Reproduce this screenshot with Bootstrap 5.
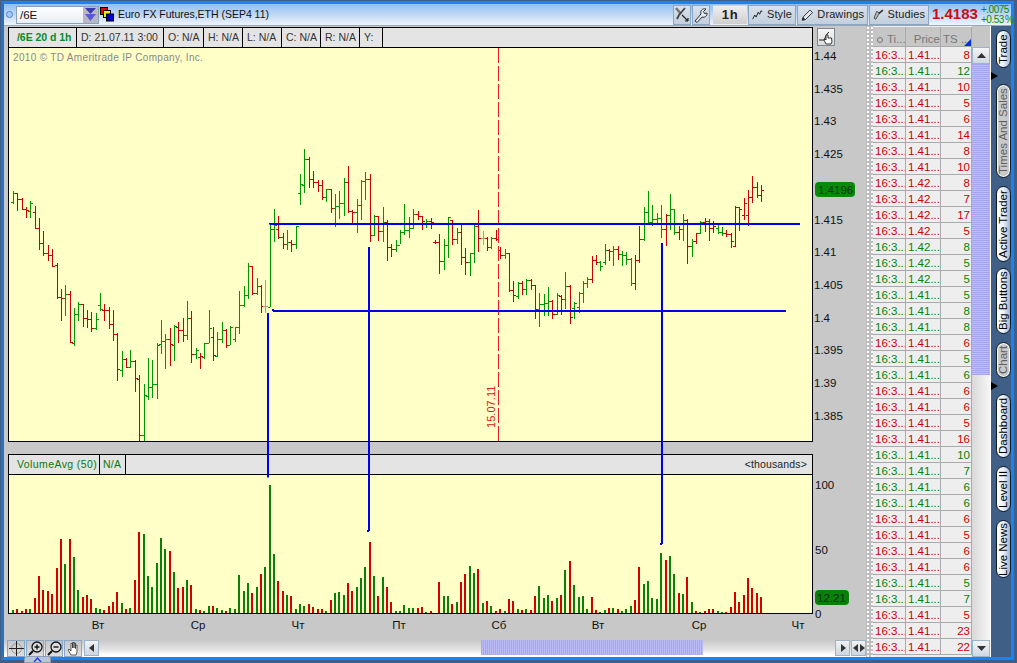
<!DOCTYPE html>
<html lang="en">
<head>
<meta charset="UTF-8">
<title>Euro FX Futures chart</title>
<link href="https://cdn.jsdelivr.net/npm/bootstrap@5.3.0/dist/css/bootstrap.min.css" rel="stylesheet">
<style>
html, body { margin: 0; width: 1017px; height: 663px; overflow: hidden; background: #3f5f87; }
body { font-family: "Liberation Sans", Arial, sans-serif; font-size: 11px; color: #111; }
svg { display: block; }
.app-frame { position: relative; margin: 1px 0 0 1px; width: 1013px; height: 659px; border: 3px solid #1784f5; border-left-color: #2a6fc4; }
.top-bar { height: 22px; background: linear-gradient(#93bff2, #c4daf5 55%, #eef4fb); border-bottom: 1px solid #9aa7b5; }
.status-dot { width: 7px; height: 7px; margin: 0 3px 0 2px; border: 1px solid #4c86d8; border-radius: 50%; background: #a9cbf3; }
.symbol-box { width: 83px; height: 18px; border: 1px solid #8aa0b8; background: linear-gradient(#fff, #e8eef6); }
.symbol-text { flex: 1; padding-left: 3px; font-size: 11.5px; line-height: 16px; }
.symbol-drop { width: 15px; background: #b8b8c4; }
.symbol-icon { margin: 0 0 0 1px; }
.symbol-name { font-size: 10.5px; letter-spacing: -.02px; }
.bar-btn { height: 20px; margin-left: 1px; padding: 0 3px; border: 1px solid #87a6c8; background: linear-gradient(#d8e1ec, #c3cfdd); font-size: 11px; color: #222; white-space: nowrap; letter-spacing: .1px; }
.btn-square { width: 18px; padding: 0; }
.btn-frame { width: 34px; margin-left: 3px; padding: 0; justify-content: center; background: linear-gradient(#eee, #cfcfcf); border-color: transparent; font-size: 13px; font-weight: bold; letter-spacing: .6px; }
.btn-style { width: 48px; }
.btn-drawings { width: 71px; }
.btn-studies { width: 60px; }
.last-price { margin-left: 3px; font-size: 15px; font-weight: bold; color: #cc0c14; width: 49px; }
.price-change { font-size: 10px; line-height: 10px; color: #0a8a0a; width: 30px; white-space: nowrap; letter-spacing: -.5px; word-spacing: -1px; }
.main-col { width: 862px; background: #c8c8c8; }
.chart-wrap { position: relative; padding: 1px 0 0 4px; }
.pane-left { width: 805px; }
.pane-head { height: 21px; background: #e4e4e4; border: 1px solid #000; font-size: 10.5px; line-height: 19px; color: #333; }
.pane-cell { height: 19px; border-right: 1px solid #000; padding-left: 4px; white-space: nowrap; }
.cell-sym { width: 68px; padding-left: 8px; color: #0a8a2a; font-weight: bold; letter-spacing: -.05px; }
.cell-d { width: 87px; }
.cell-o { width: 40px; }
.cell-h { width: 39px; }
.cell-y { width: 23px; }
.cell-vol { width: 91px; padding-left: 8px; color: #0a7a0a; letter-spacing: .4px; }
.cell-na { width: 26px; padding-left: 3px; color: #0a7a0a; letter-spacing: .2px; }
.cell-unit { flex: 1; padding-right: 5px; text-align: right; color: #222; letter-spacing: .15px; }
.price-plot { height: 394px; border: 1px solid #000; border-top: 0; background: #ffffc8; }
.vol-plot { height: 139px; border: 1px solid #000; border-top: 0; background: #ffffc8; }
.pane-gap { height: 12px; }
.time-axis { height: 26px; }
#volAxis { overflow: visible; }
.copy-note { font-family: "Liberation Sans", sans-serif; font-size: 10px; letter-spacing: .33px; fill: #888; }
.chart-pick { width: 18px; height: 18px; margin: 1px 0 0 4px; border: 1px solid #7d8794; background: linear-gradient(#f6f6f6, #ddd); }
.lines-layer { position: absolute; left: 0; top: 0; pointer-events: none; }
.bottom-bar { height: 17px; background: linear-gradient(#c8c8c8, #e6e6e6 60%, #fff 85%); padding-left: 3px; }
.tool-btn { width: 18px; height: 17px; margin-right: 1px; border: 1px solid #8aa6c6; background: linear-gradient(#c8c8c8, #dedede); }
.scroll-btn { width: 15px; height: 16px; margin-left: 1px; border: 1px solid #9db3cc; background: linear-gradient(#f2f2f2, #cdd6e0); }
.scroll-track { flex: 1; height: 15px; }
.time-thumb { width: 222px; height: 15px; margin-left: 382px; background: repeating-linear-gradient(90deg, #a6a6ee 0 1px, #bcbcf6 1px 2px); }
.split-bar { width: 7px; background-color: #bdbdbd; background-image: radial-gradient(#fff 1px, transparent 1.2px); background-size: 4px 4px; }
.trades-col { width: 99px; padding-top: 1px; background: #eee; overflow: hidden; }
.ts-grid { width: 99px; margin: 0; table-layout: fixed; border-collapse: separate; border-spacing: 0; }
.ts-grid th, .ts-grid td { height: 16px; padding: 1px 0 0 2px; border: 0; border-right: 1px solid #aaa; border-bottom: 1px solid #aaa; box-shadow: none; background: #eee; font-size: 11.5px; font-weight: normal; line-height: 14px; white-space: nowrap; overflow: hidden; }
.ts-grid th { height: 20px; background: #c6c6c6; color: #777; position: relative; }
.ts-grid td:last-child, .ts-grid th:last-child { text-align: right; padding-right: 1px; }
.ts-grid th:last-child { padding-right: 4px; }
.ts-grid .tr-up td { color: #0a800a; }
.ts-grid .tr-down td { color: #cc0000; }
.col-a { width: 33px; }
.col-b { width: 35px; }
.col-c { width: 31px; }
.head-dot { display: inline-block; width: 6px; height: 6px; margin: 0 4px 0 2px; border: 1.5px solid #777; border-radius: 50%; }
.head-flag { position: absolute; right: 0; bottom: 0; border-left: 7px solid transparent; border-bottom: 7px solid #0033dd; }
.vscroll { width: 18px; background: linear-gradient(90deg, #d9d9d9, #f6f6f6); }
.vscroll-head { height: 21px; background: #c6c6c6; border-top: 1px solid #c8c8c8; }
.vscroll-btn { width: 18px; height: 17px; border: 1px solid #9db3cc; background: linear-gradient(#f4f4f4, #cfd8e2); }
.vscroll-thumb { height: 311px; background: repeating-linear-gradient(#a6a6ee 0 1px, #bcbcf6 1px 2px); }
.white-gap { width: 1px; background: #fff; }
.tab-strip { width: 20px; padding: 4px 0 0 5px; background: #3f5f87; }
.side-tab { width: 15px; border: 1px solid #0c1a2a; border-radius: 8px; background: linear-gradient(270deg, #fff, #eaf0f8 50%, #9fb6d0); writing-mode: vertical-rl; transform: rotate(180deg); text-align: center; font-size: 11.5px; line-height: 13px; color: #000; white-space: nowrap; }
.side-tab.is-on { background: #c9c9c9; color: #5f5f5f; box-shadow: inset 0 0 0 1px #fff; }
.tab-1 { height: 38px; }
.tab-2 { height: 94px; }
.tab-3 { height: 76px; margin-top: 8px; }
.tab-4 { height: 66px; margin-top: 6px; }
.tab-5 { height: 36px; margin-top: 8px; }
.tab-6 { height: 64px; }
.tab-7 { height: 46px; margin-top: 8px; }
.tab-8 { height: 58px; margin-top: 8px; }
.tab-mark { width: 0; height: 0; margin: 4px 0 4px -5px; border-left: 7px solid #000; border-top: 4px solid transparent; border-bottom: 4px solid transparent; }
.sub-tab { position: absolute; left: 20px; bottom: -6px; width: 27px; height: 7px; background: #b9c6d6; border: 1px solid #8aa0b8; border-radius: 3px 3px 0 0; }
</style>
</head>
<body>
<div class="app-frame d-flex flex-column">
  <div class="top-bar d-flex align-items-center">
    <span class="status-dot"></span>
    <div class="symbol-box d-flex">
      <div class="symbol-text">/6E</div>
      <div class="symbol-drop d-flex align-items-center justify-content-center">
        <svg width="13" height="15" viewBox="0 0 13 15"><path d="M1 1h11L6.500 7z" fill="#3a3ab8"/><path d="M1 7h11L6.500 14z" fill="#5858d8"/></svg>
      </div>
    </div>
    <svg width="14" height="15" viewBox="0 0 14 15" class="symbol-icon"><rect x=".5" y=".5" width="7" height="7" fill="#e00" stroke="#000"/><rect x="3.500" y="3.500" width="7" height="7" fill="#ee0" stroke="#000"/><rect x="6.500" y="7" width="7" height="7" fill="#00c" stroke="#000"/></svg>
    <span class="symbol-name ms-1">Euro FX Futures,ETH (SEP4 11)</span>
    <div class="d-flex align-items-center ms-auto">
      <div class="bar-btn btn-square d-flex align-items-center justify-content-center">
        <svg width="16" height="16" viewBox="0 0 16 16"><path d="M2 1l5 6" stroke="#777" stroke-width="2.600" fill="none"/><path d="M11 1L5 8 3 12" stroke="#444" stroke-width="1.800" fill="none"/><path d="M8 8l6 6M14 14v-3M14 14h-3" stroke="#222" stroke-width="1.200" fill="none"/></svg>
      </div>
      <div class="bar-btn btn-square d-flex align-items-center justify-content-center">
        <svg width="16" height="16" viewBox="0 0 16 16"><path d="M2 14l6-7c-1-3 1-6 5-5l-2.500 2.500 1 2L14 6c.5 3-2.500 5-5 4l-5 5.500z" fill="#e2e8ef" stroke="#333" stroke-width="1"/></svg>
      </div>
      <div class="bar-btn btn-frame d-flex align-items-center">1h</div>
      <div class="bar-btn btn-style d-flex align-items-center gap-1">
        <svg width="16" height="16" viewBox="0 0 16 16"><path d="M1 14l3-6 2 3 3-7 2 3 2-5 2 1" stroke="#111" stroke-width="1.300" fill="none"/></svg>
        <span>Style</span>
      </div>
      <div class="bar-btn btn-drawings d-flex align-items-center gap-1">
        <svg width="16" height="16" viewBox="0 0 15 16"><path d="M1.500 14.500l1-4L11 2l3 3-8.500 8.500z" fill="#e4e8ee" stroke="#222" stroke-width="1.100"/><path d="M1.500 14.500l1-4 3 3z" fill="#222"/></svg>
        <span>Drawings</span>
      </div>
      <div class="bar-btn btn-studies d-flex align-items-center gap-1">
        <svg width="16" height="16" viewBox="0 0 15 16"><path d="M14 1L8 6" stroke="#333" stroke-width="2.400"/><path d="M9 5L4 14 1.500 12.500 5 3z" fill="#bbb" stroke="#222"/></svg>
        <span>Studies</span>
      </div>
      <div class="last-price">1.4183</div>
      <div class="price-change"><div>+.0075</div><div>+0.53 %</div></div>
    </div>
  </div>

  <div class="d-flex flex-grow-1">
    <div class="main-col d-flex flex-column">
      <div class="chart-wrap flex-grow-1">
        <div class="d-flex">
          <div class="pane-left pane-head d-flex">
            <div class="pane-cell cell-sym">/6E 20 d 1h</div>
            <div class="pane-cell cell-d">D: 21.07.11 3:00</div>
            <div class="pane-cell cell-o">O: N/A</div>
            <div class="pane-cell cell-h">H: N/A</div>
            <div class="pane-cell cell-h">L: N/A</div>
            <div class="pane-cell cell-h">C: N/A</div>
            <div class="pane-cell cell-h">R: N/A</div>
            <div class="pane-cell cell-y">Y:</div>
          </div>
          <div class="chart-pick d-flex align-items-center justify-content-center">
            <svg width="16" height="16" viewBox="0 0 16 16"><path d="M1 11h5l3-6 2-2" stroke="#222" fill="none"/><path d="M8 15l-2-4 1-1 1 1V6h2v3h3.500l.5 4-1 2z" fill="#fff" stroke="#222" stroke-width=".9"/></svg>
          </div>
        </div>
        <div class="d-flex">
          <div class="pane-left price-plot"><svg id="priceChart" width="803" height="393" viewBox="9 48 803 393"></svg></div>
          <svg id="priceAxis" width="53" height="394" viewBox="813 48 53 394"></svg>
        </div>
        <div class="pane-gap"></div>
        <div class="pane-left pane-head d-flex">
          <div class="pane-cell cell-vol">VolumeAvg (50)</div>
          <div class="pane-cell cell-na">N/A</div>
          <div class="pane-cell cell-unit border-0">&lt;thousands&gt;</div>
        </div>
        <div class="d-flex">
          <div class="pane-left vol-plot"><svg id="volChart" width="803" height="138" viewBox="9 475 803 138"></svg></div>
          <svg id="volAxis" width="53" height="139" viewBox="813 475 53 139"></svg>
        </div>
        <svg id="timeAxis" class="time-axis" width="858" height="26" viewBox="8 614 858 26"></svg>
        <svg class="lines-layer" width="862" height="631" viewBox="4 26 862 631" fill="none" stroke="#0000f0" stroke-width="2">
          <path d="M270 224.500V223M270 224h530"/>
          <path d="M273 309v2M273 311h513"/>
          <path d="M268 313v164.500"/>
          <path d="M369 247v284M369 531h-2"/>
          <path d="M662 243v301M662 544h-2"/>
        </svg>
      </div>
      <div class="bottom-bar d-flex align-items-start">
        <div class="tool-btn d-flex align-items-center justify-content-center">
          <svg width="15" height="15" viewBox="0 0 15 15"><circle cx="7.500" cy="7.500" r="5" stroke="#999" fill="none"/><path d="M7.500 0v15M0 7.500h15" stroke="#222"/></svg>
        </div>
        <div class="tool-btn d-flex align-items-center justify-content-center">
          <svg width="15" height="15" viewBox="0 0 15 15"><circle cx="9" cy="6" r="5" fill="#ddd" stroke="#111" stroke-width="1.300"/><path d="M5 10l-4 4" stroke="#111" stroke-width="2"/><path d="M6.500 6h5M9 3.500v5" stroke="#111" stroke-width="1.400"/></svg>
        </div>
        <div class="tool-btn d-flex align-items-center justify-content-center">
          <svg width="15" height="15" viewBox="0 0 15 15"><circle cx="9" cy="6" r="5" fill="#ddd" stroke="#111" stroke-width="1.300"/><path d="M5 10l-4 4" stroke="#111" stroke-width="2"/><path d="M6.500 6h5" stroke="#111" stroke-width="1.400"/></svg>
        </div>
        <div class="tool-btn d-flex align-items-center justify-content-center">
          <svg width="15" height="15" viewBox="0 0 15 15"><path d="M5 14l-3-5 1-1 2 2V2.500h1.500V7V1.500H8V7V2h1.500v5.500V4H11v7l-1 3z" fill="#fff" stroke="#333" stroke-width=".8"/></svg>
        </div>
        <div class="scroll-btn d-flex align-items-center justify-content-center">
          <svg width="6" height="8" viewBox="0 0 6 8"><path d="M5 0v8L0 4z" fill="#333"/></svg>
        </div>
        <div class="scroll-track"><div class="time-thumb"></div></div>
        <div class="scroll-btn d-flex align-items-center justify-content-center">
          <svg width="6" height="8" viewBox="0 0 6 8"><path d="M1 0v8l5-4z" fill="#333"/></svg>
        </div>
        <div class="scroll-btn d-flex align-items-center justify-content-center">
          <svg width="12" height="8" viewBox="0 0 12 8"><path d="M5 0v8L0 4zM7 0v8l5-4z" fill="#333"/></svg>
        </div>
      </div>
    </div>

    <div class="split-bar"></div>

    <div class="trades-col">
      <table class="table ts-grid">
        <colgroup><col class="col-a"><col class="col-b"><col class="col-c"></colgroup>
        <thead><tr><th><span class="head-dot"></span>Ti...</th><th class="text-end">Price</th><th>TS ...<span class="head-flag"></span></th></tr></thead>
        <tbody id="tradeRows"></tbody>
      </table>
    </div>

    <div class="vscroll d-flex flex-column">
      <div class="vscroll-head"></div>
      <div class="vscroll-btn d-flex align-items-center justify-content-center">
        <svg width="9" height="5" viewBox="0 0 9 5"><path d="M0 5h9L4.500 0z" fill="#333"/></svg>
      </div>
      <div class="vscroll-thumb"></div>
      <div class="flex-grow-1"></div>
      <div class="vscroll-btn d-flex align-items-center justify-content-center">
        <svg width="9" height="5" viewBox="0 0 9 5"><path d="M0 0h9L4.500 5z" fill="#333"/></svg>
      </div>
    </div>
    <div class="white-gap"></div>

    <div class="tab-strip d-flex flex-column">
      <div class="side-tab tab-1">Trade</div>
      <div class="tab-mark"></div>
      <div class="side-tab tab-2 is-on">Times And Sales</div>
      <div class="side-tab tab-3">Active Trader</div>
      <div class="side-tab tab-4">Big Buttons</div>
      <div class="side-tab tab-5 is-on">Chart</div>
      <div class="tab-mark"></div>
      <div class="side-tab tab-6">Dashboard</div>
      <div class="side-tab tab-7">Level II</div>
      <div class="side-tab tab-8">Live News</div>
    </div>
  </div>
  <div class="sub-tab d-flex justify-content-center">
    <svg width="9" height="5" viewBox="0 0 9 5"><path d="M1 5l3.500-4L8 5" fill="none" stroke="#2a3ee0" stroke-width="1.400"/></svg>
  </div>
</div>

<script>
// volume tops are read off the 3x crop, y = 450 + top / 3
const volTops = [480,477,483,477,477,444,378,420,423,432,354,267,342,267,321,420,441,435,447,474,477,480,468,456,426,459,477,474,390,246,252,378,411,339,264,297,303,366,414,411,390,405,477,480,483,468,468,474,480,483,474,477,375,423,399,429,411,372,351,105,312,393,423,435,438,477,462,468,462,471,477,477,483,450,429,426,435,399,423,411,384,351,276,378,438,381,411,456,483,483,465,474,474,474,471,486,483,490,396,438,438,462,456,396,372,348,369,357,459,453,468,483,477,483,447,453,477,480,477,480,438,408,444,435,453,444,435,360,333,405,441,438,477,441,480,486,480,474,474,477,483,477,468,450,351,402,393,444,447,309,330,318,372,429,432,381,456,483,486,483,477,477,483,486,486,471,426,456,435,384,414,429,441];
const barColors = 'GRRRGRRRRRRRGRGGRRRGGRRRRGRGRRGGGGGGRGRRGRGRGGRGGRGGGGGRGRGGGRRGRGGGRRRRGRGGGRRGGGRGRGRRGGGGGRRGRRRGGRGRRGGRGRGRRGRRGRGRRGGGRGRGRGGGGRRGGRGRGGGRRGGGGGRGGRGRGRGRRRGG';

// [high, low, open, close] in crop units of the three zoomed regions
const crop1 = [[33,72,65,40],[40,93,40,58],[54,90,58,88],[82,114,88,91],[63,114,94,70],[78,147,97,144],[114,210,145,190],[153,228,190,220],[195,243,220,226],[207,261,226,258],[250,358,256,352],[327,423,350,355],[315,408,355,343],[333,489,343,486],[384,497,489,403],[366,423,403,372],[372,441,372,415],[390,444,415,418],[397,456,418,445],[399,450,443,417],[339,393,376,388],[372,423,390,391],[381,447,391,433],[390,483,433,463],[460,603,463,568],[514,591,571,537],[535,564,537,561],[510,564,561,544],[540,636,544,595],[585,790,598,766],[612,790,766,646],[534,660,648,622],[540,654,622,613],[490,657,613,495],[420,522,493,484],[462,567,484,478],[444,558,478,492],[435,543,495,438],[426,489,440,450],[414,486,450,465],[363,480,465,414],[393,549,414,522],[504,537,522,510],[520,567,530,527],[489,537,531,490],[390,490,490,444],[441,543,471,525],[456,531,528,478],[426,489,478,450],[447,504,450,495],[438,495,495,441],[441,486,477,441],[333,462,441,375],[318,381,375,346],[249,357,346,258],[258,345,258,340],[294,345,340,318],[315,399,318,379],[300,399,379,379]];
const crop2 = [[249,500,500,267],[207,306,267,255],[228,297,267,292],[280,327,292,312],[270,330,312,306],[300,336,306,313],[258,327,313,259],[102,195,159,133],[27,159,135,57],[51,144,57,118],[93,144,118,127],[120,156,127,134],[120,180,134,172],[147,186,172,148],[147,219,148,204],[162,261,204,197],[153,237,197,189],[114,228,189,126],[78,219,126,213],[210,255,213,216],[177,279,216,195],[120,240,195,123],[96,180,123,118],[102,306,118,285],[225,288,285,227],[228,303,227,273],[201,306,273,246],[240,363,246,321],[312,351,321,327],[300,336,327,315],[270,312,315,276],[192,285,276,270],[231,294,270,264],[207,267,264,222],[213,240,222,228],[228,270,228,244],[237,264,248,243],[234,267,243,246],[300,312,307,307],[282,402,306,364],[297,390,364,315],[231,354,315,232],[240,315,240,296],[264,312,296,276],[255,375,276,350],[324,405,350,367],[339,408,367,340],[255,369,340,258],[210,336,258,295],[273,315,295,295],[292,333,295,322],[291,327,322,293],[270,303,293,297],[321,357,330,345],[327,357,345,338],[339,456,340,450],[423,486,450,465],[426,477,468,429],[423,465,429,447],[417,465,447,421],[417,450,421,435],[435,537,435,507],[459,561,507,492],[462,528,492,490],[441,528,490,483]];
const crop3 = [[420,477,423,462],[400,465,462,405],[405,465,408,417],[336,448,418,378],[375,492,378,472],[425,475,445,428],[395,457,440,398],[362,428,398,368],[352,384,368,358],[288,370,358,300],[285,315,300,305],[303,333,305,317],[252,315,306,270],[267,303,270,272],[258,318,272,268],[258,300,268,282],[273,318,282,285],[276,315,285,296],[295,378,296,370],[285,390,370,300],[198,309,300,238],[141,243,238,157],[93,190,157,187],[135,198,187,178],[159,195,178,174],[135,234,174,207],[162,258,207,165],[102,210,165,147],[147,225,147,217],[198,240,217,208],[162,243,208,180],[177,312,180,259],[237,291,259,243],[219,252,243,220],[183,222,220,186],[174,217,186,183],[177,243,183,204],[183,219,204,198],[195,222,204,216],[200,226,216,219],[210,231,219,222],[219,264,222,243],[138,261,258,141],[141,213,141,148],[114,180,165,130],[90,198,165,111],[48,129,111,81],[66,114,81,105],[75,126,105,90]];

const toY = (base, z) => base + z / 3;
const bars = [
  ...crop1.map(b => b.map(z => toY(180, z))),
  ...crop2.map(b => b.map(z => toY(140, z))),
  ...crop3.map(b => b.map(z => toY(160, z)))
];

function rect(x, y, w, h, fill) {
  return `<rect x="${x}" y="${Math.round(y)}" width="${w}" height="${Math.max(1, Math.round(h))}" fill="${fill}"/>`;
}

function text(x, y, s, extra) {
  return `<text x="${x}" y="${y}" ${extra || ''}>${s}</text>`;
}

// price bars, ticks drawn like the original OHLC style
let priceSvg = text(13, 61, '2010 © TD Ameritrade IP Company, Inc.', 'class="copy-note"');
bars.forEach((b, i) => {
  const x = Math.round(13 + 4.35 * i);
  let col = barColors[i] === 'G' ? '#009600' : '#cc0000';
  if (i === 58 || i === 108) col = '#a0a0a0';
  priceSvg += rect(x, b[0], 1, b[1] - b[0], col);
  priceSvg += rect(x - 2, b[2], 2, 1, col);
  priceSvg += rect(x + 1, b[3], 2, 1, col);
});
for (let y = 48; y < 441; y += 18) priceSvg += rect(498, y, 1, 15, '#ee1c25');
priceSvg += `<text transform="translate(495 428) rotate(-90)" fill="#e02020" font-size="11" letter-spacing=".05" font-family="Liberation Sans">15.07.11</text>`;
document.getElementById('priceChart').innerHTML = priceSvg;

let volSvg = '';
volTops.forEach((top, i) => {
  if (top >= 490) return;
  const x = Math.round(12 + 4.35 * i);
  const y = Math.round(450 + top / 3);
  volSvg += `<rect x="${x}" y="${y}" width="2" height="${613 - y}" fill="${barColors[i] === 'G' ? '#0a800a' : '#d40000'}"/>`;
});
document.getElementById('volChart').innerHTML = volSvg;

const axisFont = 'font-family="Liberation Sans" font-size="11.5" fill="#111"';
let priceAxis = '';
['1.44', '1.435', '1.43', '1.425', '', '1.415', '1.41', '1.405', '1.4', '1.395', '1.39', '1.385'].forEach((s, i) => {
  if (s) priceAxis += text(814, Math.round(60 + 32.7 * i), s, axisFont);
});
priceAxis += `<rect x="815" y="182" width="40" height="15" rx="4" fill="#0a8a0a"/>`;
priceAxis += text(818, 194, '1.4196', 'font-family="Liberation Sans" font-size="11.5" fill="#031"');
document.getElementById('priceAxis').innerHTML = priceAxis;

let volAxis = text(815, 489, '100', axisFont) + text(815, 554, '50', axisFont) + text(815, 618, '0', axisFont);
volAxis += `<rect x="815" y="590" width="34" height="15" rx="4" fill="#0a800a"/>`;
volAxis += text(817, 602, '12.21', 'font-family="Liberation Sans" font-size="11.5" fill="#031"');
document.getElementById('volAxis').innerHTML = volAxis;

let timeAxis = '';
[['Вт', 98], ['Ср', 198], ['Чт', 298], ['Пт', 399], ['Сб', 499], ['Вт', 598], ['Ср', 699], ['Чт', 798]].forEach(([s, x]) => {
  timeAxis += text(x, 629, s, axisFont + ' text-anchor="middle"');
});
document.getElementById('timeAxis').innerHTML = timeAxis;

// times and sales rows: side, price prefix, size
const trades = 'R8 G12 R10 R5 R6 R14 R8 R10 r8 r7 r17 r5 g8 g5 g5 G5 G8 G8 R6 G5 G6 R6 R6 R5 R16 G10 G7 G6 G6 R6 R5 R6 R6 G5 G7 R5 R23 R22'.split(' ');
document.getElementById('tradeRows').innerHTML = trades.map(t => {
  const up = t[0].toUpperCase() === 'G';
  const price = t[0] === t[0].toUpperCase() ? '1.41...' : '1.42...';
  return `<tr class="${up ? 'tr-up' : 'tr-down'}"><td>16:3...</td><td>${price}</td><td>${t.slice(1)}</td></tr>`;
}).join('');
</script>
<script src="https://cdn.jsdelivr.net/npm/bootstrap@5.3.0/dist/js/bootstrap.bundle.min.js"></script>
</body>
</html>
